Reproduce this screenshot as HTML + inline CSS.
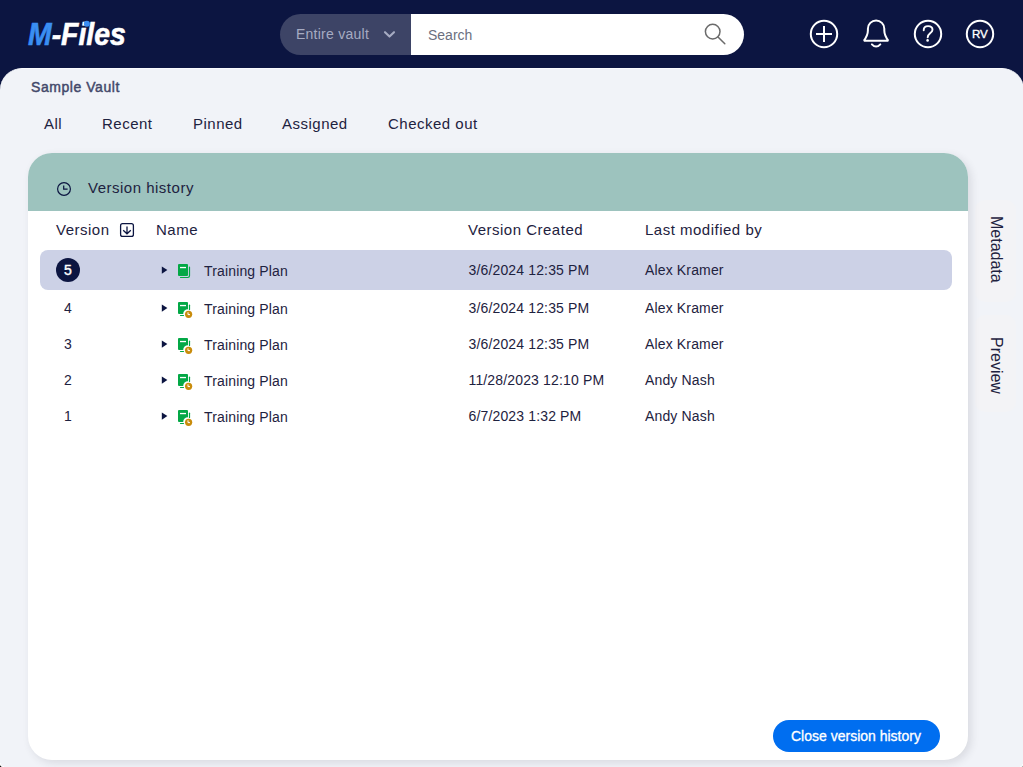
<!DOCTYPE html>
<html><head><meta charset="utf-8">
<style>
*{box-sizing:border-box;margin:0;padding:0}
html,body{width:1023px;height:767px;overflow:hidden;background:#0c1541;font-family:"Liberation Sans",sans-serif}
svg{position:absolute;overflow:visible}
.t{position:absolute;white-space:nowrap;line-height:20px;height:20px}
#hdr{position:absolute;left:0;top:0;width:1023px;height:68px;background:#0c1541}
#logo{position:absolute;left:28px;top:16px;font:italic bold 31.5px/36px "Liberation Sans",sans-serif;color:#fff;letter-spacing:0px;-webkit-text-stroke:0.6px currentColor;transform:scaleX(0.9);transform-origin:0 0}
#logo .m{color:#3a8ef2}
#scope{position:absolute;left:280px;top:14px;width:131px;height:41px;background:#3d4466;border-radius:21px 0 0 21px;color:#a6abc2;font-size:14px}
#search{position:absolute;left:411px;top:14px;width:333px;height:41px;background:#fff;border-radius:0 21px 21px 0;color:#6b6f80;font-size:14px}
#main{position:absolute;left:0;top:68px;width:1024px;height:699px;background:#f1f3f8;border-radius:22px 22px 0 0;border-top:1px solid #fafbfd}
#panel{position:absolute;left:28px;top:153px;width:940px;height:607px;background:#fff;border-radius:24px;box-shadow:3px 3px 9px rgba(40,40,55,.12);overflow:hidden}
#phead{position:absolute;left:0;top:0;width:940px;height:58px;background:#9dc3be}
#sel{position:absolute;left:12px;top:97px;width:912px;height:40px;background:#ccd1e6;border-radius:8px}
#closebtn{position:absolute;left:745px;top:567px;width:167px;height:32px;background:#006ef0;border-radius:16px;color:#fff;font-size:14px}
.tab{font-size:15px;color:#1e2240;letter-spacing:0.5px}
.ch{font-size:15px;color:#1e2240;letter-spacing:0.5px}
.cell{font-size:14px;color:#1e2240;letter-spacing:0.15px}
.vt{position:absolute;writing-mode:vertical-rl;font-size:16px;color:#1e2240;line-height:20px;white-space:nowrap}
</style></head><body>
<div id="hdr">
  <div id="logo"><span class="m">M</span>-Files</div>
  <svg style="left:0;top:0" width="120" height="60"><circle cx="86.9" cy="23.8" r="3" fill="#3a8ef2"/></svg>
  <div id="scope"><span class="t" style="left:16px;top:10px;letter-spacing:0.25px">Entire vault</span>
    <svg style="left:0;top:0" width="131" height="41"><path d="M105 18.2 L109.5 22.6 L114 18.2" fill="none" stroke="#a6abc2" stroke-width="2.1" stroke-linecap="round" stroke-linejoin="round"/></svg>
  </div>
  <div id="search"><span class="t" style="left:17px;top:11px">Search</span>
    <svg style="left:0;top:0" width="333" height="41"><circle cx="301.7" cy="17.6" r="7.3" fill="none" stroke="#6b6b6b" stroke-width="1.5"/><path d="M307 23 L313.8 29.8" stroke="#6b6b6b" stroke-width="1.5" stroke-linecap="round"/></svg>
  </div>
  <svg style="left:0;top:0" width="1023" height="68">
    <g fill="none" stroke="#fff" stroke-width="2">
      <circle cx="824" cy="34" r="13.2"/>
      <path d="M816 34H832M824 26V42"/>
      <path d="M863.8 40.8 H888.4 M863.8 40.8 C 866.6 37 867.9 34 867.9 30.5 V 28.7 A 8.2 8.2 0 0 1 884.3 28.7 V 30.5 C 884.3 34 885.6 37 888.4 40.8" stroke-linejoin="round"/>
      <path d="M871.9 44.4 Q 876.1 48.8 880.3 44.4" stroke-linecap="round"/>
      <circle cx="928" cy="34" r="13.2"/>
      <circle cx="980" cy="34" r="13.2"/>
      <path d="M923.7 30.2 C 923.7 27.4 925.6 26.1 928.1 26.1 C 930.7 26.1 932.5 27.7 932.5 29.8 C 932.5 32.8 928 33.4 927.7 37.2" stroke-width="1.9" stroke-linecap="round"/>
    </g>
    <circle cx="927.6" cy="40.4" r="1.3" fill="#fff"/>
  </svg>
  <span class="t" style="left:972px;top:23.5px;font-size:11.6px;color:#fff;letter-spacing:-0.2px;-webkit-text-stroke:0.35px #fff">RV</span>
</div>
<div id="main">
  <span class="t" style="left:31px;top:7.5px;font-size:14px;color:#43486a;letter-spacing:0.55px;-webkit-text-stroke:0.45px #43486a">Sample Vault</span>
  <span class="t tab" style="left:44px;top:45px">All</span>
  <span class="t tab" style="left:102px;top:45px">Recent</span>
  <span class="t tab" style="left:193px;top:45px">Pinned</span>
  <span class="t tab" style="left:282px;top:45px">Assigned</span>
  <span class="t tab" style="left:388px;top:45px">Checked out</span>
  <div style="position:absolute;left:975px;top:131px;width:41px;height:102px;border-radius:10px;background:#f3f3f6"></div>
  <div style="position:absolute;left:975px;top:246px;width:41px;height:97px;border-radius:10px;background:#f3f3f6"></div>
  <span class="vt" style="left:986px;top:147px">Metadata</span>
  <span class="vt" style="left:986px;top:267.5px">Preview</span>
</div>
<div id="panel">
  <div id="phead">
    <svg style="left:0;top:0" width="100" height="58"><circle cx="36" cy="36" r="6.4" fill="none" stroke="#0c1541" stroke-width="1.2"/><path d="M35.7 32.4 V36.2 H39.6" fill="none" stroke="#0c1541" stroke-width="1.25"/></svg>
    <span class="t ch" style="left:60px;top:25px">Version history</span>
  </div>
  <span class="t ch" style="left:28px;top:67.3px">Version</span>
  <svg style="left:0;top:0" width="140" height="100"><rect x="92.6" y="70.6" width="12.8" height="12.8" rx="2" fill="none" stroke="#0c1541" stroke-width="1.3"/><path d="M99 73.5V80.5M95.2 77.3L99 80.8L102.8 77.3" fill="none" stroke="#0c1541" stroke-width="1.3"/></svg>
  <span class="t ch" style="left:128px;top:67.3px">Name</span>
  <span class="t ch" style="left:440px;top:67.3px">Version Created</span>
  <span class="t ch" style="left:617px;top:67.3px">Last modified by</span>
  <div id="sel"></div>
  <div id="rows">
<div style="position:absolute;left:28px;top:105px;width:24px;height:24px;border-radius:12px;background:#0c1541"></div>
<span class="t cell" style="left:36px;top:107px;color:#fff;letter-spacing:0;-webkit-text-stroke:0.4px #fff">5</span>
<svg style="left:0;top:105px" width="200" height="24"><path d="M133.8 8.4 L139.4 12 L133.8 15.8 Z" fill="#0c1541"/><rect x="150" y="6" width="10" height="12" rx="1" fill="#03a846"/><rect x="152" y="8.9" width="6" height="1.3" fill="#fff"/><path d="M161.5 9.2 V17.8 Q161.5 19.5 159.8 19.5 H152.5" fill="none" stroke="#03a846" stroke-width="1.2" stroke-linecap="round"/></svg>
<span class="t cell" style="left:176px;top:108px">Training Plan</span>
<span class="t cell" style="left:440.5px;top:107.4px">3/6/2024 12:35 PM</span>
<span class="t cell" style="left:617px;top:107.4px">Alex Kramer</span>
<span class="t cell" style="left:36px;top:145.2px">4</span>
<svg style="left:0;top:143px" width="200" height="24"><path d="M133.8 8.4 L139.4 12 L133.8 15.8 Z" fill="#0c1541"/><path d="M151 6 H159 Q160 6 160 7 V13.2 A4.8 4.8 0 0 0 155.2 18 H151 Q150 18 150 17 V7 Q150 6 151 6 Z" fill="#03a846"/><rect x="152" y="8.9" width="6" height="1.3" fill="#fff"/><path d="M161.5 9.2 V13.6" fill="none" stroke="#03a846" stroke-width="1.2" stroke-linecap="round"/><path d="M152.5 19.5 H155.5" fill="none" stroke="#03a846" stroke-width="1.2" stroke-linecap="round"/><circle cx="160.6" cy="18.3" r="3.6" fill="#c98c0c"/><path d="M160 16.3 V18.6 H162" fill="none" stroke="#fff" stroke-width="1" /></svg>
<span class="t cell" style="left:176px;top:146px">Training Plan</span>
<span class="t cell" style="left:440.5px;top:145.4px">3/6/2024 12:35 PM</span>
<span class="t cell" style="left:617px;top:145.4px">Alex Kramer</span>
<span class="t cell" style="left:36px;top:181.2px">3</span>
<svg style="left:0;top:179px" width="200" height="24"><path d="M133.8 8.4 L139.4 12 L133.8 15.8 Z" fill="#0c1541"/><path d="M151 6 H159 Q160 6 160 7 V13.2 A4.8 4.8 0 0 0 155.2 18 H151 Q150 18 150 17 V7 Q150 6 151 6 Z" fill="#03a846"/><rect x="152" y="8.9" width="6" height="1.3" fill="#fff"/><path d="M161.5 9.2 V13.6" fill="none" stroke="#03a846" stroke-width="1.2" stroke-linecap="round"/><path d="M152.5 19.5 H155.5" fill="none" stroke="#03a846" stroke-width="1.2" stroke-linecap="round"/><circle cx="160.6" cy="18.3" r="3.6" fill="#c98c0c"/><path d="M160 16.3 V18.6 H162" fill="none" stroke="#fff" stroke-width="1" /></svg>
<span class="t cell" style="left:176px;top:182px">Training Plan</span>
<span class="t cell" style="left:440.5px;top:181.4px">3/6/2024 12:35 PM</span>
<span class="t cell" style="left:617px;top:181.4px">Alex Kramer</span>
<span class="t cell" style="left:36px;top:217.2px">2</span>
<svg style="left:0;top:215px" width="200" height="24"><path d="M133.8 8.4 L139.4 12 L133.8 15.8 Z" fill="#0c1541"/><path d="M151 6 H159 Q160 6 160 7 V13.2 A4.8 4.8 0 0 0 155.2 18 H151 Q150 18 150 17 V7 Q150 6 151 6 Z" fill="#03a846"/><rect x="152" y="8.9" width="6" height="1.3" fill="#fff"/><path d="M161.5 9.2 V13.6" fill="none" stroke="#03a846" stroke-width="1.2" stroke-linecap="round"/><path d="M152.5 19.5 H155.5" fill="none" stroke="#03a846" stroke-width="1.2" stroke-linecap="round"/><circle cx="160.6" cy="18.3" r="3.6" fill="#c98c0c"/><path d="M160 16.3 V18.6 H162" fill="none" stroke="#fff" stroke-width="1" /></svg>
<span class="t cell" style="left:176px;top:218px">Training Plan</span>
<span class="t cell" style="left:440.5px;top:217.4px">11/28/2023 12:10 PM</span>
<span class="t cell" style="left:617px;top:217.4px">Andy Nash</span>
<span class="t cell" style="left:36px;top:253.2px">1</span>
<svg style="left:0;top:251px" width="200" height="24"><path d="M133.8 8.4 L139.4 12 L133.8 15.8 Z" fill="#0c1541"/><path d="M151 6 H159 Q160 6 160 7 V13.2 A4.8 4.8 0 0 0 155.2 18 H151 Q150 18 150 17 V7 Q150 6 151 6 Z" fill="#03a846"/><rect x="152" y="8.9" width="6" height="1.3" fill="#fff"/><path d="M161.5 9.2 V13.6" fill="none" stroke="#03a846" stroke-width="1.2" stroke-linecap="round"/><path d="M152.5 19.5 H155.5" fill="none" stroke="#03a846" stroke-width="1.2" stroke-linecap="round"/><circle cx="160.6" cy="18.3" r="3.6" fill="#c98c0c"/><path d="M160 16.3 V18.6 H162" fill="none" stroke="#fff" stroke-width="1" /></svg>
<span class="t cell" style="left:176px;top:254px">Training Plan</span>
<span class="t cell" style="left:440.5px;top:253.4px">6/7/2023 1:32 PM</span>
<span class="t cell" style="left:617px;top:253.4px">Andy Nash</span>
</div>
  <div id="closebtn"><span class="t" style="left:18px;top:6px;-webkit-text-stroke:0.3px #fff">Close version history</span></div>
</div>
<div style="position:absolute;left:0;top:763px;width:4px;height:4px;background:#000"><div style="width:4px;height:4px;background:#f1f3f8;border-bottom-left-radius:3.5px;box-shadow:inset 0.7px -0.7px 0 #fff"></div></div>
<div style="position:absolute;left:1020px;top:764px;width:3px;height:3px;background:#777"><div style="width:3px;height:3px;background:#f1f3f8;border-bottom-right-radius:2.5px;box-shadow:inset -0.6px -0.6px 0 #fff"></div></div>
</body></html>
